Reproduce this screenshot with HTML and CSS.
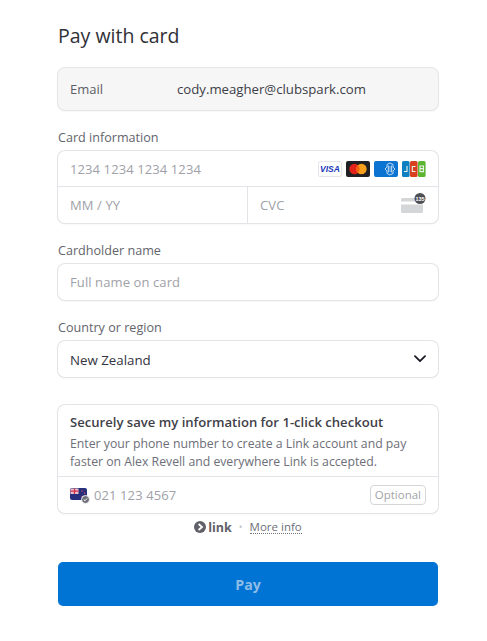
FILE: index.html
```html
<!DOCTYPE html>
<html lang="en">
<head>
<meta charset="utf-8">
<title>Pay with card</title>
<link rel="stylesheet" href="styles.css">
</head>
<body>
<main class="page">
  <h1 class="title">Pay with card</h1>
  <div class="email-box"><span class="email-label">Email</span><span class="email-value">cody.meagher@clubspark.com</span></div>

  <div class="label label-card">Card information</div>
  <div class="box card-box">
    <div class="row card-row">
      <span class="ph">1234 1234 1234 1234</span>
      <span class="brands">
        <svg class="brand" viewBox="0 0 24 16" width="24" height="16"><rect x=".5" y=".5" width="23" height="15" rx="1.5" fill="#fff" stroke="#e3e5ea"/><text x="12" y="11.2" text-anchor="middle" class="visa">VISA</text></svg>
        <svg class="brand" viewBox="0 0 24 16" width="24" height="16"><rect width="24" height="16" rx="2" fill="#1f2024"/><circle cx="8.500" cy="8" r="5.200" fill="#e2231a"/><circle cx="15.500" cy="8" r="5.200" fill="#f79e1b"/><path d="M12 4.200a5.200 5.200 0 0 1 0 7.600 5.200 5.200 0 0 1 0-7.600z" fill="#f5600f"/></svg>
        <svg class="brand" viewBox="0 0 24 16" width="24" height="16"><rect width="24" height="16" rx="2" fill="#0b73d1"/><path d="M13 3.500l3-1.500 3 1.500V6l2 2-2 2v2.500L16 14l-3-1.500V10l-2-2 2-2z" fill="none" stroke="#cfe4f8" stroke-width=".9"/><path d="M13.500 6h5M13.500 8h5M13.500 10h5M14.500 4.500v7M17.500 4.500v7" stroke="#cfe4f8" stroke-width=".7"/></svg>
        <svg class="brand" viewBox="0 0 24 16" width="24" height="16"><rect x="0" y="0" width="7.600" height="16" rx="1.600" fill="#0e7fc0"/><rect x="8" y="0" width="7.600" height="16" rx="1.600" fill="#d8401f"/><rect x="16" y="0" width="7.600" height="16" rx="1.600" fill="#5cb531"/><path d="M5 5v5.500H2M13.500 5.500h-3.200v5h3.200M18 5h3.500v2.600H18zM18 7.600h3.500v3H18z" fill="none" stroke="#e8f3ea" stroke-width="1.100"/></svg>
      </span>
    </div>
    <div class="row split">
      <div class="cell cell-exp"><span class="ph">MM / YY</span></div>
      <div class="cell cell-cvc">
        <span class="ph">CVC</span>
        <span class="cvc-icon">
          <svg viewBox="0 0 25 20" width="25" height="20"><rect x="0" y="5" width="22" height="15" rx="1.500" fill="#d5d6d8"/><rect x="0" y="8.500" width="22" height="3" fill="#fff"/><circle cx="19" cy="5.500" r="5.500" fill="#4d4f54"/><text x="19" y="7.500" text-anchor="middle" class="cvc-num">135</text></svg>
        </span>
      </div>
    </div>
  </div>

  <div class="label label-name">Cardholder name</div>
  <div class="box field"><span class="ph">Full name on card</span></div>

  <div class="label label-country">Country or region</div>
  <div class="box field select">
    <span class="select-value">New Zealand</span>
    <svg class="chev" viewBox="0 0 12 8" width="12" height="8"><path d="M1 1.200l5 5 5-5" fill="none" stroke="#1a1b25" stroke-width="1.800" stroke-linecap="round" stroke-linejoin="round"/></svg>
  </div>

  <div class="box link-box">
    <div class="link-text">
      <div class="link-title">Securely save my information for 1-click checkout</div>
      <p class="link-desc">Enter your phone number to create a Link account and pay faster on Alex Revell and everywhere Link is accepted.</p>
    </div>
    <div class="phone-row">
      <span class="flag">
        <svg viewBox="0 0 20 17" width="20" height="17"><rect x="0" y="1" width="17" height="12" rx="2" fill="#28307e"/><rect x="0.500" y="1.500" width="8" height="5.500" fill="#e8c4cc"/><path d="M.5 4.200h8M4.500 1.500V7" stroke="#d8304a" stroke-width="1.300"/><circle cx="12" cy="4" r=".7" fill="#e04a5a"/><circle cx="14.500" cy="6" r=".7" fill="#e04a5a"/><circle cx="12" cy="9.500" r=".7" fill="#e04a5a"/><circle cx="15.500" cy="12.500" r="4" fill="#6d6e78" stroke="#fff" stroke-width=".9"/><path d="M13.700 12.500l1.300 1.300 2.200-2.400" fill="none" stroke="#fff" stroke-width="1"/></svg>
      </span>
      <span class="ph phone-ph">021 123 4567</span>
      <span class="optional">Optional</span>
    </div>
  </div>

  <div class="link-foot">
    <span class="link-logo"><svg viewBox="0 0 12 12" width="12" height="12"><circle cx="6" cy="6" r="6" fill="#5f6068"/><path d="M4.600 3l3.400 3-3.400 3" fill="none" stroke="#fff" stroke-width="1.800"/></svg><b class="link-word">link</b></span>
    <span class="dot">•</span>
    <span class="more">More info</span>
  </div>

  <button class="pay" type="button">Pay</button>
</main>
</body>
</html>
```

FILE: styles.css
```css
* { box-sizing: border-box; }
html, body { margin: 0; padding: 0; background: #fff; }
body { font-family: "Open Sans", "Noto Sans", "Liberation Sans", sans-serif; color: #30313d; width: 487px; height: 641px; overflow: hidden; }
.page { padding: 22px 49px 0 58px; display: flex; flex-direction: column; }
.title { margin: 0; font-size: 19.5px; line-height: 28px; font-weight: 500; color: #303036; }
.box { background: #fff; border-radius: 7px; box-shadow: 0 0 0 1px #e3e4e8, 0 1px 2px rgba(0,0,0,.1); }
.email-box { margin-top: 18px; height: 42px; border-radius: 7px; background: #f6f6f6; box-shadow: 0 0 0 1px #e6e6e8, 0 1px 2px rgba(0,0,0,.1); display: flex; align-items: center; padding-left: 12px; font-size: 13px; }
.email-label { width: 107px; color: #5c5d66; font-weight: 500; }
.email-value { color: #3c3d47; font-size: 13.2px; }
.label { font-size: 12.6px; line-height: 16px; font-weight: 500; color: #63646c; }
.label-card { margin-top: 20px; }
.label-name, .label-country { margin-top: 20px; }
.card-box { margin-top: 5px; height: 72px; display: flex; flex-direction: column; }
.row { display: flex; align-items: center; }
.card-row { height: 36px; padding: 0 12px; justify-content: space-between; border-bottom: 1px solid #e3e4e8; }
.ph { font-size: 13px; color: #a0a1a8; letter-spacing: .1px; }
.brands { display: flex; }
.brand { display: block; margin-left: 4px; }
.visa { font: italic 700 8.5px "Liberation Sans", sans-serif; fill: #1736b8; }
.cvc-num { font: 700 5.5px "Liberation Sans", sans-serif; fill: #fff; }
.split { flex: 1; }
.cell { height: 100%; display: flex; align-items: center; padding: 0 12px; }
.cell-exp { width: 190px; border-right: 1px solid #e3e4e8; }
.cell-cvc { flex: 1; justify-content: space-between; }
.cvc-icon { display: flex; margin-top: -4px; }
.field { margin-top: 5px; height: 36px; display: flex; align-items: center; padding: 0 12px; }
.select { justify-content: space-between; }
.select-value { font-size: 13.3px; color: #33343e; padding-top: 1px; }
.chev { display: block; }
.link-box { margin-top: 28px; height: 108px; display: flex; flex-direction: column; }
.link-text { height: 72px; padding: 8px 12px 0; border-bottom: 1px solid #e3e4e8; }
.link-title { font-size: 13.1px; line-height: 18px; font-weight: 600; color: #3f4048; }
.link-desc { margin: 4px 0 0; font-size: 12.25px; line-height: 18px; color: #6d6e78; }
.phone-row { flex: 1; display: flex; align-items: center; padding: 0 12px; }
.flag { display: flex; margin-right: 4px; margin-top: 1px; }
.phone-ph { flex: 1; }
.optional { font-size: 11.5px; line-height: 18px; height: 20px; padding: 0 4px; color: #a3a4aa; border: 1px solid #d5d6da; border-radius: 4px; }
.link-foot { margin-top: 5px; height: 18px; display: flex; align-items: center; justify-content: center; gap: 7px; font-size: 11.5px; color: #6d6e78; }
.link-logo { display: flex; align-items: center; gap: 2px; }
.link-word { font-size: 12.5px; font-weight: 700; color: #5f6068; }
.dot { font-size: 10px; color: #c4c5ca; }
.more { border-bottom: 1px dotted #6d6e78; line-height: 13px; }
.pay { margin-top: 26px; height: 44px; width: 380px; border: 0; border-radius: 5px; background: #0074d4; color: #8dbce6; font: 700 14.2px "Open Sans", "Noto Sans", sans-serif; }
```
